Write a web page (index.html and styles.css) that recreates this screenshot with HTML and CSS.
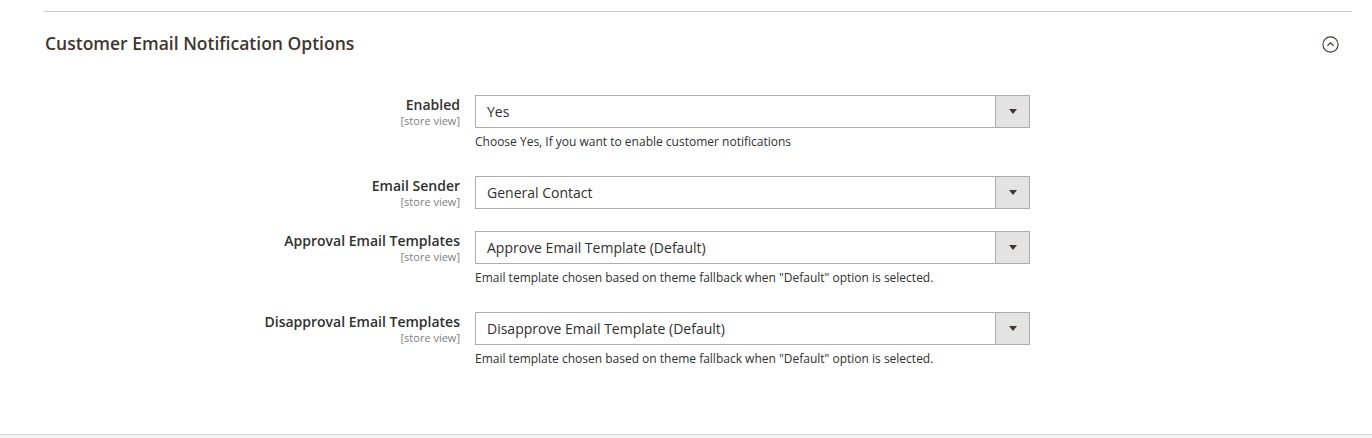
FILE: index.html
```html
<!DOCTYPE html>
<html>

<head>
    <title>Customer Email Notification Options</title>
    <link rel="stylesheet" href="styles.css">
</head>

<body>
    <div class="page">
        <section class="fieldset">
            <div class="fieldset-head">
                <h2>Customer Email Notification Options</h2>
                <svg class="collapse" width="17" height="17" viewBox="0 0 17 17">
                    <circle cx="8.5" cy="8.5" r="7.6" fill="none" stroke="#41362f" stroke-width="1.1" />
                    <path d="M5.4 9.8 L8.5 6.9 L11.6 9.8" fill="none" stroke="#41362f" stroke-width="1.2" />
                </svg>
            </div>

            <div class="rows">
                <div class="row">
                    <div class="label">
                        <span>Enabled</span>
                        <small>[store view]</small>
                    </div>
                    <div class="control">
                        <div class="select"><span>Yes</span><i class="arrow"></i></div>
                        <p class="note">Choose Yes, If you want to enable customer notifications</p>
                    </div>
                </div>

                <div class="row">
                    <div class="label">
                        <span>Email Sender</span>
                        <small>[store view]</small>
                    </div>
                    <div class="control">
                        <div class="select"><span>General Contact</span><i class="arrow"></i></div>
                    </div>
                </div>

                <div class="row">
                    <div class="label">
                        <span>Approval Email Templates</span>
                        <small>[store view]</small>
                    </div>
                    <div class="control">
                        <div class="select"><span>Approve Email Template (Default)</span><i class="arrow"></i></div>
                        <p class="note">Email template chosen based on theme fallback when "Default" option is selected.</p>
                    </div>
                </div>

                <div class="row">
                    <div class="label">
                        <span>Disapproval Email Templates</span>
                        <small>[store view]</small>
                    </div>
                    <div class="control">
                        <div class="select"><span>Disapprove Email Template (Default)</span><i class="arrow"></i></div>
                        <p class="note">Email template chosen based on theme fallback when "Default" option is selected.</p>
                    </div>
                </div>
            </div>
        </section>
    </div>
    <div class="page-bottom"></div>
</body>

</html>
```

FILE: styles.css
```css
* {
    box-sizing: border-box;
}

body {
    margin: 0;
    background-color: #fff;
    font-family: "Open Sans", "Liberation Sans", sans-serif;
    color: #303030;
}

.page {
    padding: 11px 20px 0 44px;
    height: 435px;
    border-bottom: 1px solid #d6d6d6;
}

.page-bottom {
    background-color: #f2f2f2;
    height: 10px;
}

.fieldset {
    border-top: 1px solid #cccccc;
}

.fieldset-head {
    display: flex;
    align-items: center;
    justify-content: space-between;
    height: 64px;
    padding-left: 1px;
    padding-right: 13px;
}

.fieldset-head h2 {
    margin: 0 0 2px;
    font-size: 17.5px;
    font-weight: 600;
    color: #41362f;
}

.collapse {
    display: block;
}

.rows {
    margin-top: 19px;
    display: flex;
    flex-direction: column;
    gap: 22px;
}

.row {
    display: grid;
    grid-template-columns: 416px 555px;
    column-gap: 15px;
}

.label {
    text-align: right;
    padding-top: 1px;
    display: flex;
    flex-direction: column;
}

.label span {
    font-size: 14px;
    font-weight: 600;
    line-height: 18px;
    color: #303030;
}

.label small {
    font-size: 11px;
    line-height: 13px;
    color: #808080;
}

.select {
    height: 33px;
    border: 1px solid #adadad;
    display: flex;
    align-items: center;
    justify-content: space-between;
    font-size: 14px;
    padding-left: 11px;
}

.arrow {
    width: 34px;
    height: 100%;
    border-left: 1px solid #adadad;
    background-color: #e3e3e3;
    position: relative;
}

.arrow::after {
    content: "";
    position: absolute;
    left: 13px;
    top: 13px;
    border-left: 4px solid transparent;
    border-right: 4px solid transparent;
    border-top: 5px solid #41362f;
}

.note {
    margin: 5px 0 3px;
    font-size: 12px;
    line-height: 18px;
}
```
